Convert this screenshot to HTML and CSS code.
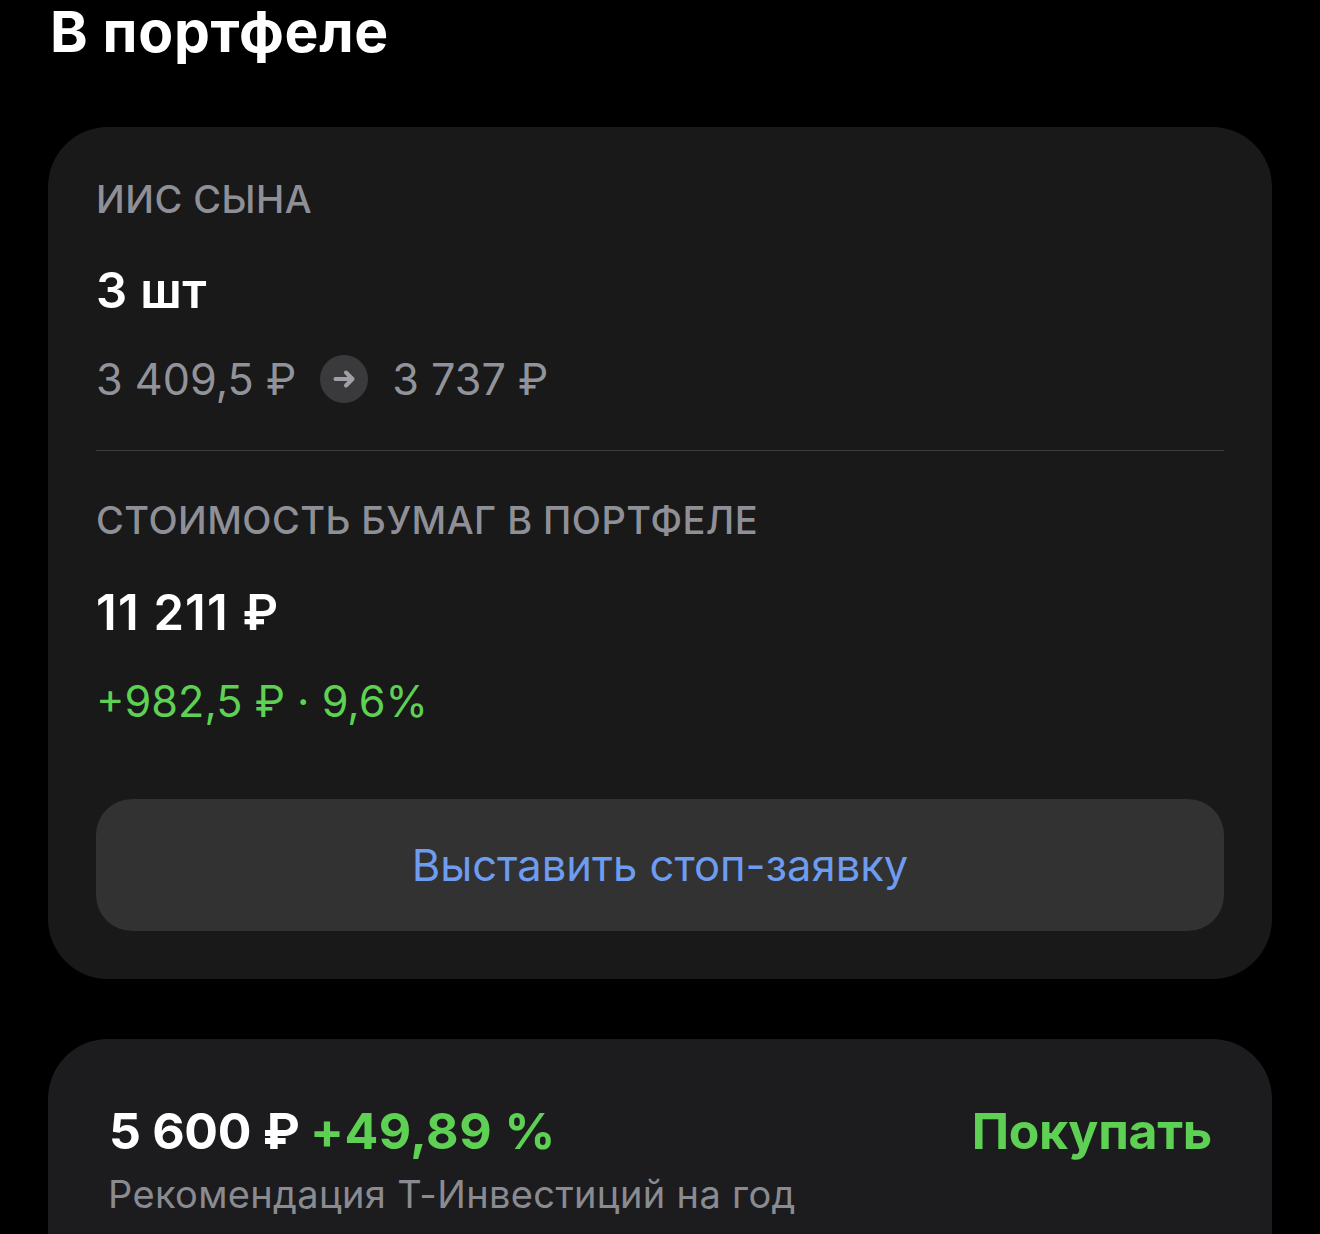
FILE: index.html
```html
<!DOCTYPE html>
<html lang="ru">
<head>
<meta charset="utf-8">
<title>В портфеле</title>
<link rel="stylesheet" href="styles.css">
</head>
<body>
<main class="page">
  <h1 class="title">В портфеле</h1>
  <section class="card">
    <div class="label">ИИС СЫНА</div>
    <div class="value">3 шт</div>
    <div class="prices">
      <span>3 409,5 ₽</span>
      <span class="arrow">
        <svg width="24" height="24" viewBox="0 0 24 24" fill="none" stroke="#a0a1a8" stroke-width="4" stroke-linecap="round" stroke-linejoin="round"><path d="M3.5 12h17M14 5.5l6.5 6.5-6.5 6.5"/></svg>
      </span>
      <span>3 737 ₽</span>
    </div>
    <hr class="divider">
    <div class="label">СТОИМОСТЬ БУМАГ В ПОРТФЕЛЕ</div>
    <div class="value value-sum">11 211 ₽</div>
    <div class="gain">+982,5 ₽ · 9,6%</div>
    <button class="stop">Выставить стоп-заявку</button>
  </section>
  <section class="card card-rec">
    <div class="rec-top">
      <div class="rec-price">5 600 ₽ <span class="green rec-gain">+49,89 %</span></div>
      <div class="rec-action green">Покупать</div>
    </div>
    <div class="rec-note">Рекомендация Т-Инвестиций на год</div>
  </section>
</main>
</body>
</html>
```
FILE: styles.css
```css
* { box-sizing: border-box; }
html, body { margin: 0; height: 100%; background: #000; overflow: hidden; }
body { font-family: Inter, "Noto Sans", sans-serif; color: #fff; }
.page { height: 1234px; overflow: hidden; padding: 0 48px; }
.title { margin: 0 0 0 2px; font-size: 57px; line-height: 64px; font-weight: 700; height: 127px; letter-spacing: 0.7px; }
.card { background: #191919; border-radius: 60px; padding: 48px; height: 852px; margin-bottom: 60px; }
.label { font-size: 38px; line-height: 48px; color: #8f9097; letter-spacing: 0.45px; font-weight: 500; }
.value { font-size: 49px; line-height: 56px; font-weight: 600; margin-top: 40px; letter-spacing: 0.4px; }
.value-sum { margin-top: 41px; letter-spacing: 1.2px; }
.prices { display: flex; align-items: center; gap: 24px; margin-top: 32px; font-size: 43.2px; line-height: 56px; color: #92939a; }
.arrow { width: 48px; height: 48px; border-radius: 50%; background: #3a3a3c; display: flex; align-items: center; justify-content: center; }
.divider { border: 0; height: 1px; background: #3c3c3e; margin: 43px 0 45px; }
.gain { font-size: 43.2px; line-height: 56px; color: #5ed053; margin-top: 32px; }
.stop { display: block; width: 100%; height: 132px; margin-top: 70px; border: 0; border-radius: 36px; background: #323232; color: #6e9cf0; font: 400 43.5px Inter, sans-serif; }
.card-rec { background: #1c1c1e; padding: 60px 60px 0 60px; height: auto; min-height: 300px; margin: 0; }
.rec-top { display: flex; justify-content: space-between; align-items: center; }
.rec-price, .rec-action { font-size: 50px; line-height: 64px; font-weight: 700; }
.rec-price { margin-left: 1px; letter-spacing: -0.3px; }
.rec-gain { letter-spacing: 0.5px; margin-left: -1px; }
.rec-action { letter-spacing: -0.3px; }
.green { color: #5ed053; }
.rec-note { font-size: 38px; line-height: 48px; color: #8a8b91; margin-top: 7px; letter-spacing: 0.35px; }
```
